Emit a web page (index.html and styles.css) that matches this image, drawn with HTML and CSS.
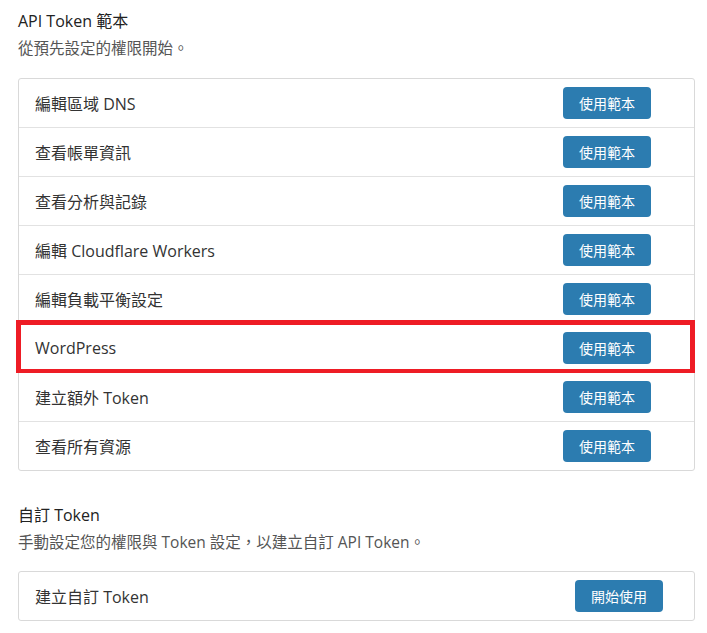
FILE: index.html
```html
<!DOCTYPE html>
<html lang="zh-Hant">
<head>
    <meta charset="UTF-8">
    <meta name="viewport" content="width=device-width, initial-scale=1.0">
    <title>API Token 範本</title>
    <link rel="stylesheet" href="styles.css">
</head>
<body>
    <!-- Templates -->
    <section class="section">
        <h2 class="section-title">API Token 範本</h2>
        <p class="section-desc">從預先設定的權限開始。</p>
        <div class="card templates">
            <div class="row"><span>編輯區域 DNS</span><button class="btn">使用範本</button></div>
            <div class="row"><span>查看帳單資訊</span><button class="btn">使用範本</button></div>
            <div class="row"><span>查看分析與記錄</span><button class="btn">使用範本</button></div>
            <div class="row"><span>編輯 Cloudflare Workers</span><button class="btn">使用範本</button></div>
            <div class="row"><span>編輯負載平衡設定</span><button class="btn">使用範本</button></div>
            <div class="row"><span>WordPress</span><button class="btn">使用範本</button></div>
            <div class="row"><span>建立額外 Token</span><button class="btn">使用範本</button></div>
            <div class="row"><span>查看所有資源</span><button class="btn">使用範本</button></div>
        </div>
    </section>

    <!-- Custom token -->
    <section class="section custom">
        <h2 class="section-title">自訂 Token</h2>
        <p class="section-desc">手動設定您的權限與 Token 設定，以建立自訂 API Token。</p>
        <div class="card">
            <div class="row"><span>建立自訂 Token</span><button class="btn">開始使用</button></div>
        </div>
    </section>

    <!-- highlight around WordPress -->
    <div class="highlight"></div>
</body>
</html>
```

FILE: styles.css
```css
body {
    margin: 0;
    padding: 9px 12px 0 18px;
    background: #fff;
    color: #333;
    font-family: "Open Sans", "Noto Sans CJK TC", sans-serif;
    position: relative;
}

.section-title {
    margin: 0;
    font-size: 16px;
    font-weight: 400;
    line-height: 24px;
    color: #222;
}

.section-desc {
    margin: 3px 0 18px;
    font-size: 15.5px;
    line-height: 24px;
    color: #555;
}

.custom {
    margin-top: 32px;
}

.custom .section-desc {
    margin-bottom: 17px;
}

.card {
    border: 1px solid #d9d9d9;
    border-radius: 3px;
}

.row {
    display: flex;
    align-items: center;
    justify-content: space-between;
    height: 48px;
    padding: 0 31px 0 16px;
    border-bottom: 1px solid #e2e2e2;
    font-size: 16px;
}

.row:last-child {
    border-bottom: none;
}

.templates .row {
    padding-right: 43px;
}

.btn {
    width: 88px;
    height: 32px;
    border: none;
    border-radius: 4px;
    background: #2c7cb0;
    color: #fff;
    font-family: "Noto Sans CJK TC", sans-serif;
    font-size: 14px;
    cursor: pointer;
}

.highlight {
    position: absolute;
    left: 16px;
    top: 320px;
    width: 679px;
    height: 53px;
    box-sizing: border-box;
    border: 5px solid #ee1c25;
    border-bottom-width: 4px;
}
```
